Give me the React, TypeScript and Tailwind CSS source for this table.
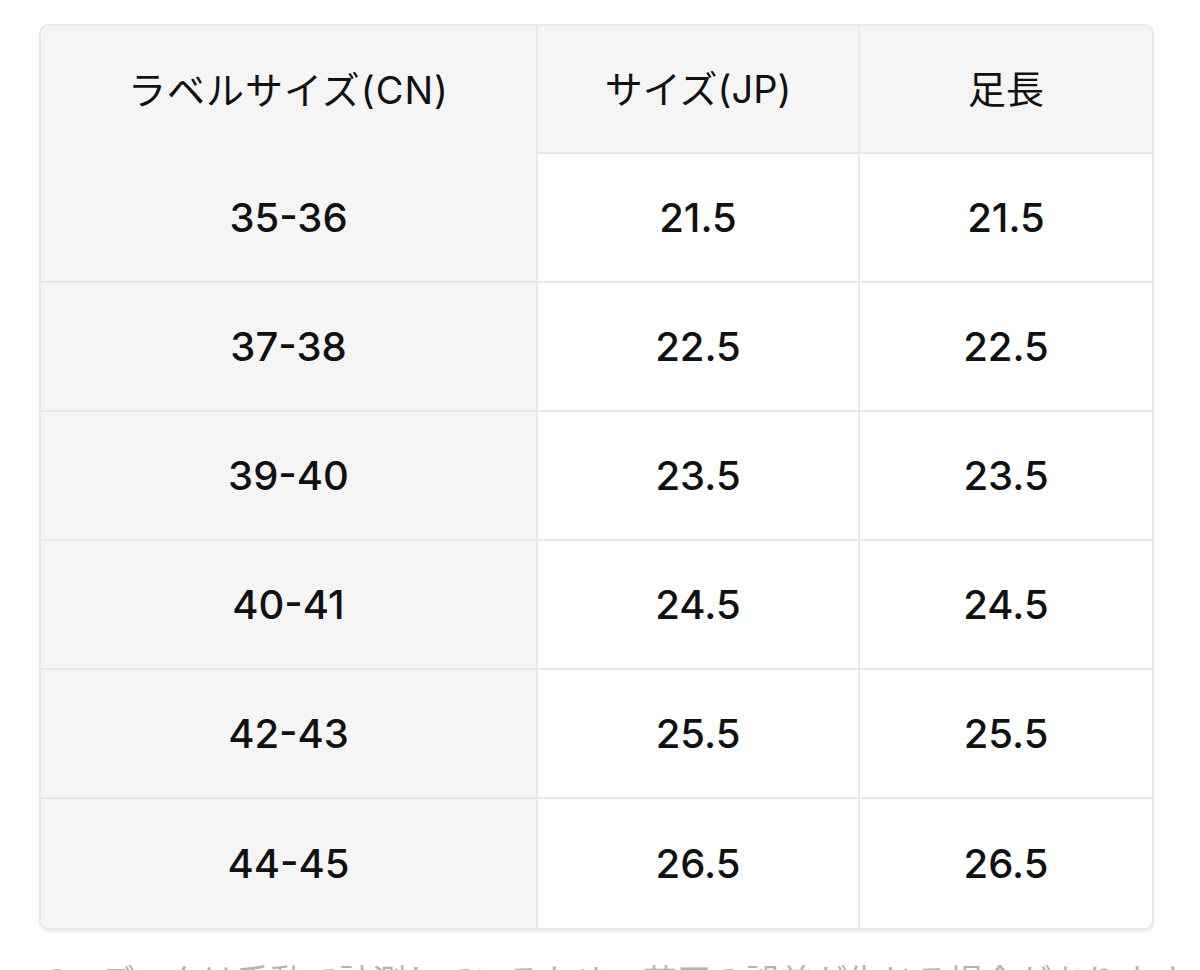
import React from 'react';

const rows = [
  { cn: '35-36', jp: '21.5', foot: '21.5' },
  { cn: '37-38', jp: '22.5', foot: '22.5' },
  { cn: '39-40', jp: '23.5', foot: '23.5' },
  { cn: '40-41', jp: '24.5', foot: '24.5' },
  { cn: '42-43', jp: '25.5', foot: '25.5' },
  { cn: '44-45', jp: '26.5', foot: '26.5' },
];

const font = { fontFamily: 'Inter, "Noto Sans CJK JP", sans-serif' };

const App: React.FC = () => {
  return (
    <div className="w-[1200px] h-[970px] overflow-hidden bg-white text-[#111]" style={font}>
      <div className="pt-[24px] pl-[39px]">
        <div className="w-[1115px] rounded-[10px] border-2 border-[#e8e8e8] overflow-hidden shadow-[0_2px_3px_rgba(0,0,0,0.08)]">
          <div className="grid grid-cols-[497px_322px_1fr] grid-rows-[128px_repeat(6,129px)]">
            {/* header row */}
            <div className="bg-[#f5f5f5] border-r-2 border-[#e8e8e8] flex items-center justify-center text-[38px] tracking-[1px]">
              ラベルサイズ(CN)
            </div>
            <div className="bg-[#f5f5f5] border-r-2 border-b-2 border-[#e8e8e8] flex items-center justify-center text-[38px]">
              サイズ(JP)
            </div>
            <div className="bg-[#f5f5f5] border-b-2 border-[#e8e8e8] flex items-center justify-center text-[38px]">
              足長
            </div>

            {rows.map((row, i) => {
              const last = i === rows.length - 1;
              return (
                <React.Fragment key={row.cn}>
                  <div
                    className={`bg-[#f5f5f5] border-r-2 border-[#e8e8e8] flex items-center justify-center text-[40px] font-medium ${last ? '' : 'border-b-2'}`}
                  >
                    {row.cn}
                  </div>
                  <div
                    className={`bg-white border-r-2 border-[#e8e8e8] flex items-center justify-center text-[40px] font-medium ${last ? '' : 'border-b-2'}`}
                  >
                    {row.jp}
                  </div>
                  <div
                    className={`bg-white border-[#e8e8e8] flex items-center justify-center text-[40px] font-medium ${last ? '' : 'border-b-2'}`}
                  >
                    {row.foot}
                  </div>
                </React.Fragment>
              );
            })}
          </div>
        </div>

        {/* note under table, cut off by the viewport */}
        <div className="mt-[26px] ml-[5px] flex items-center gap-[30px] text-[34px] text-[#b3b3b3] whitespace-nowrap">
          <span className="w-[26px] h-[26px] rounded-full border-[3px] border-[#b3b3b3] shrink-0" />
          <span>データは手動で計測しているため、若干の誤差が生じる場合があります</span>
        </div>
      </div>
    </div>
  );
};

export default App;
